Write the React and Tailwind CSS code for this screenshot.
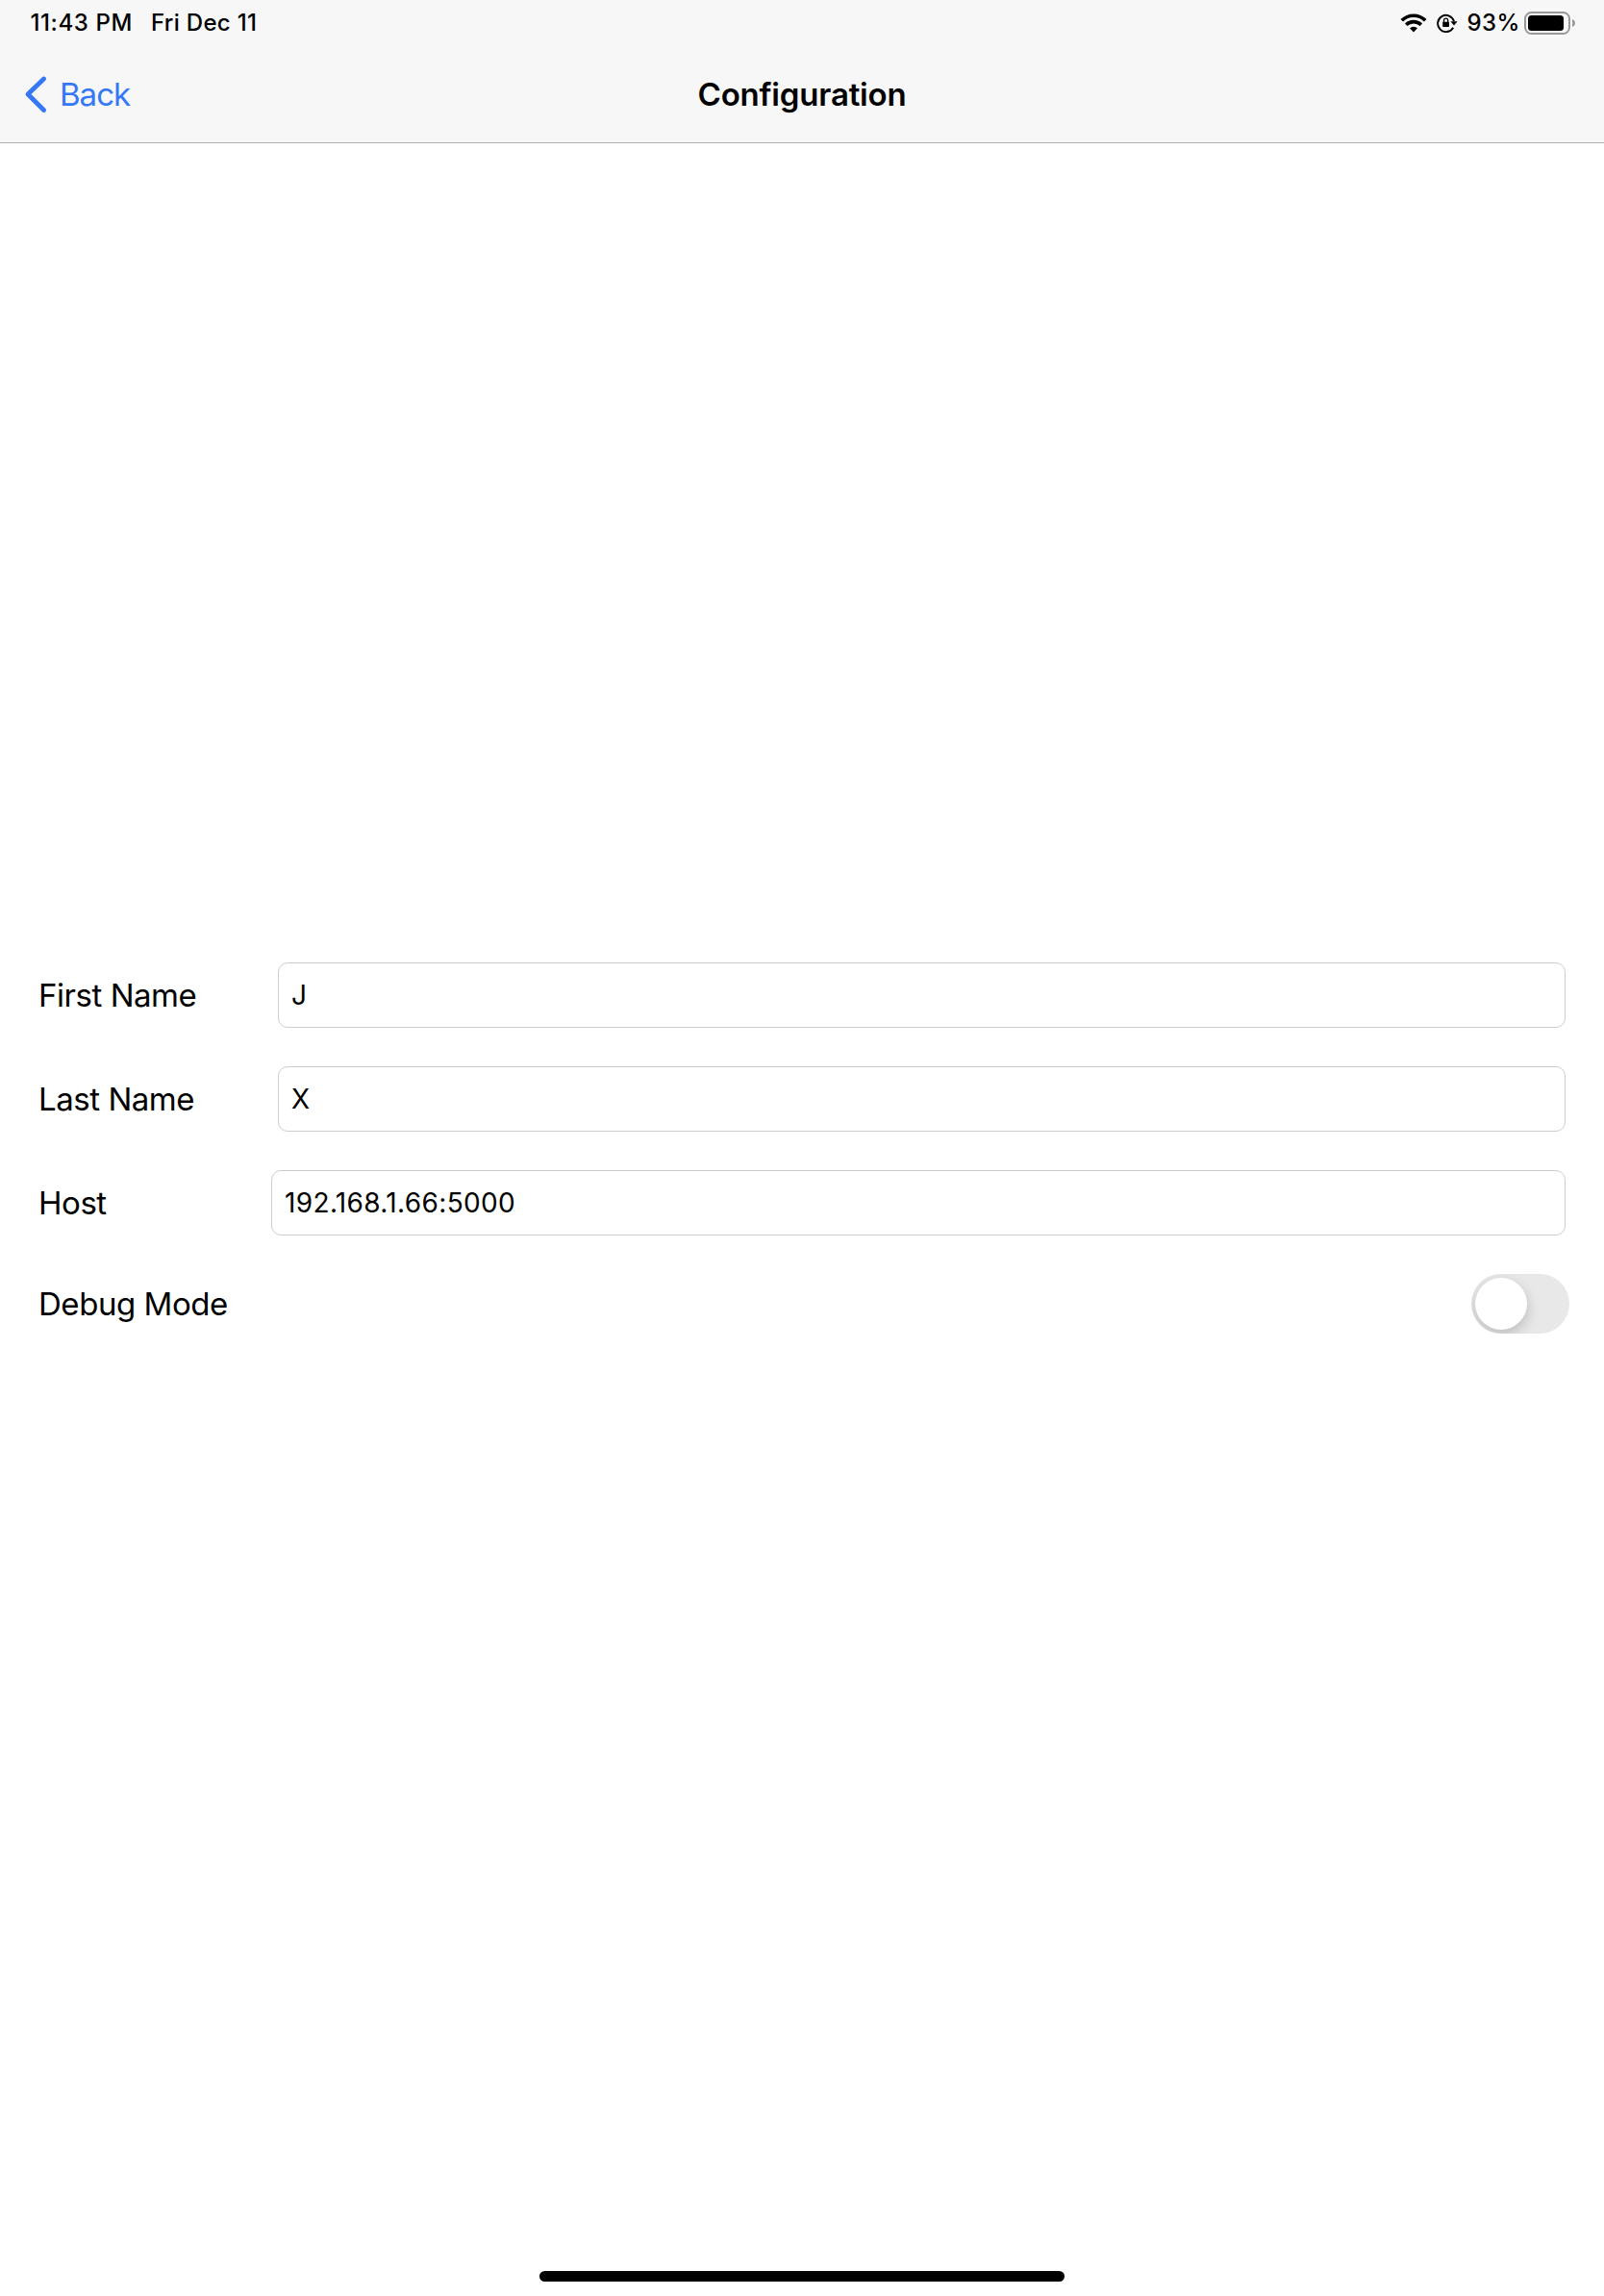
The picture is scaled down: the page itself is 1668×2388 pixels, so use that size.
function WifiIcon() {
  return (
    <svg width="28" height="20" viewBox="0 0 28 20" fill="none" stroke="#000">
      <path d="M1.8 7.3a17.3 17.3 0 0 1 24.4 0" strokeWidth="3.7" />
      <path d="M6.2 11.8a11.1 11.1 0 0 1 15.6 0" strokeWidth="3.6" />
      <path d="M14 19.6l-4-4.3a6 6 0 0 1 8 0z" fill="#000" stroke="none" />
    </svg>
  );
}

function RotationLockIcon() {
  return (
    <svg width="22" height="20" viewBox="0 0 22 20" fill="none" stroke="#000">
      <path d="M17.2 14.7A8.6 8.6 0 1 1 18 8.2" strokeWidth="1.9" />
      <path d="M14.4 8.2h7.2L18 12.4z" fill="#000" stroke="none" />
      <rect x="6.2" y="8.7" width="6.8" height="5.4" rx="0.8" fill="#000" stroke="none" />
      <path d="M7.5 9V7.2a2.1 2.1 0 0 1 4.2 0V9" strokeWidth="1.3" />
    </svg>
  );
}

function BatteryIcon() {
  return (
    <svg width="54" height="24" viewBox="0 0 54 24" fill="none">
      <rect x="1" y="1" width="46" height="22" rx="6.5" stroke="#999" strokeWidth="2" />
      <rect x="4" y="4" width="37" height="16" rx="3.5" fill="#000" />
      <path d="M50 8c1.900.7 3 2.200 3 4s-1.100 3.300-3 4z" fill="#999" />
    </svg>
  );
}

function StatusBar() {
  return (
    <div className="flex h-12 items-center justify-between pr-[29px] pl-[31.5px] text-[24px] leading-none font-medium">
      <div className="flex gap-[19px]">
        <span className="tracking-[0.6px]">11:43 PM</span>
        <span className="tracking-[0.31px]">Fri Dec 11</span>
      </div>
      <div className="flex items-center">
        <WifiIcon />
        <div className="ml-2.5">
          <RotationLockIcon />
        </div>
        <span className="ml-[9.5px] w-[59.5px] tracking-[0.4px]">93%</span>
        <BatteryIcon />
      </div>
    </div>
  );
}

function NavBar() {
  return (
    <div className="grid h-[100px] grid-cols-3 items-center text-[33px] leading-none">
      <button className="flex items-center gap-[13px] pl-[25px] text-[#3478f6]">
        <svg width="24" height="40" viewBox="0 0 24 40" fill="none" stroke="currentColor">
          <path d="M20.600 4L4 20l16.600 16.500" strokeWidth="4.800" strokeLinecap="round" strokeLinejoin="round" />
        </svg>
        <span className="tracking-[-0.99px]">Back</span>
      </button>
      <h1 className="text-center font-semibold tracking-[-0.19px]">Configuration</h1>
    </div>
  );
}

function Field({ label, value, labelClass }) {
  return (
    <div className="flex items-center">
      <span className={`${labelClass} shrink-0 text-[33px] leading-none tracking-[-0.46px]`}>{label}</span>
      <div className="flex h-[68px] flex-1 items-center rounded-[10px] border border-[#cdcdcd] px-[13px] text-[28px] leading-none tracking-[0.35px]">
        {value}
      </div>
    </div>
  );
}

export default function App() {
  return (
    <div className="flex h-[2388px] w-[1668px] flex-col bg-white font-['Inter',sans-serif] text-black">
      <header className="h-[149px] shrink-0 border-b border-[#b2b2b2] bg-[#f7f7f7]">
        <StatusBar />
        <NavBar />
      </header>
      <main className="flex flex-1 flex-col justify-center gap-10 px-10 pb-[123px]">
        <Field label="First Name" value="J" labelClass="w-[249px]" />
        <Field label="Last Name" value="X" labelClass="w-[249px]" />
        <Field label="Host" value="192.168.1.66:5000" labelClass="w-[242px]" />
        <div className="-mr-1 flex items-center justify-between">
          <span className="text-[33px] leading-none tracking-[-0.46px]">Debug Mode</span>
          <div className="flex h-[62px] w-[102px] items-center overflow-hidden rounded-full bg-[#e8e8e8] p-1">
            <div className="size-[54px] rounded-full bg-white shadow-[0_5px_14px_rgba(0,0,0,0.2)]" />
          </div>
        </div>
      </main>
      <footer className="flex h-[26px] shrink-0 items-start justify-center">
        <div className="h-[11px] w-[546px] rounded-full bg-black" />
      </footer>
    </div>
  );
}
